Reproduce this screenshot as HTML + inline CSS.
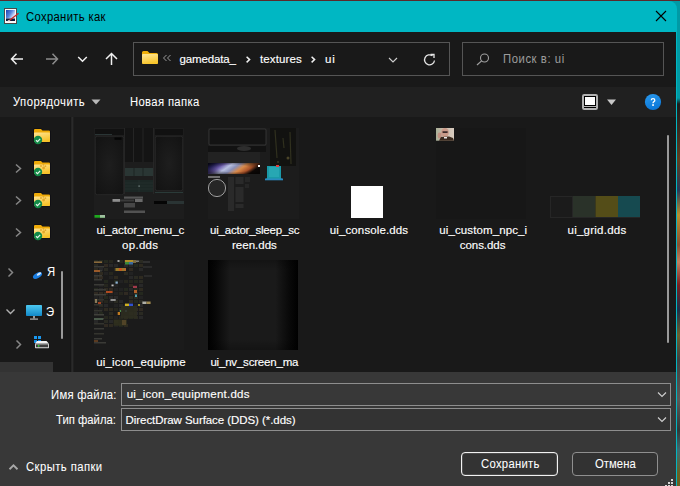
<!DOCTYPE html>
<html><head><meta charset="utf-8">
<style>
*{margin:0;padding:0;box-sizing:border-box}
html,body{width:680px;height:486px;overflow:hidden;background:#1a2a30}
body{position:relative;font-family:"Liberation Sans",sans-serif;font-size:12px;color:#fff}
.a{position:absolute}
.t{position:absolute;white-space:pre;line-height:14px;font-size:11.5px;-webkit-text-stroke:0.15px currentColor}
</style></head><body>
<!-- background strip on right -->
<div class="a" style="left:676px;top:0;width:4px;height:486px;background:linear-gradient(#009aa5 0,#009aa5 98px,#1c1c1c 104px,#3a2a20 130px,#604020 160px,#2a3a58 190px,#b89030 215px,#8a5030 245px,#c08060 262px,#7a2020 285px,#203048 310px,#6a6030 335px,#404040 360px,#5a5a58 400px,#303838 430px,#406a70 450px,#6a6020 475px,#6a6020 486px)"></div>
<div class="a" style="left:660px;top:1px;width:20px;height:12px;background:#009aa5"></div>
<div class="a" style="left:0;top:0;width:680px;height:1px;background:#5a2a2c"></div>
<!-- dialog -->
<div class="a" style="left:0;top:1px;width:677px;height:485px;background:#00b7c3;border-top-right-radius:8px"></div>
<div class="a" style="left:0;top:32px;width:676px;height:454px;background:#191919"></div>
<!-- title -->
<svg class="a" style="left:0;top:0" width="24" height="30" viewBox="0 0 24 30">
 <defs><linearGradient id="ig" x1="0" y1="0" x2="1" y2="0.6"><stop offset="0" stop-color="#1a40b0"/><stop offset="0.55" stop-color="#5a88e0"/><stop offset="1" stop-color="#f0f4ff"/></linearGradient></defs>
 <rect x="4.5" y="8.5" width="12" height="15" fill="#fafafa" stroke="#4a4a4a"/>
 <rect x="6" y="10" width="9" height="8.5" fill="url(#ig)"/>
 <rect x="6" y="18.5" width="9" height="2.5" fill="#0c1838"/>
 <path d="M9 20.8L18.6 13.2" stroke="#c42a2a" stroke-width="1.4"/>
 <path d="M7.5 21.8L9.5 20.3" stroke="#e8e8e8" stroke-width="1.3"/>
</svg>
<svg class="a" style="left:655px;top:10px" width="12" height="12" viewBox="0 0 12 12"><path d="M1 1L11 11M11 1L1 11" stroke="#000" stroke-width="1.1"/></svg>

<!-- nav -->
<svg class="a" style="left:10px;top:53px" width="14" height="12" viewBox="0 0 14 12"><path d="M13 6H1.5M6.5 0.8L1.5 6L6.5 11.2" fill="none" stroke="#f0f0f0" stroke-width="1.5"/></svg>
<svg class="a" style="left:45px;top:53px" width="14" height="12" viewBox="0 0 14 12"><path d="M1 6H12.5M7.5 0.8L12.5 6L7.5 11.2" fill="none" stroke="#8c8c8c" stroke-width="1.5"/></svg>
<svg class="a" style="left:77px;top:55px" width="11" height="8" viewBox="0 0 11 8"><path d="M1.2 2L5.5 6.2L9.8 2" fill="none" stroke="#f0f0f0" stroke-width="1.5"/></svg>
<svg class="a" style="left:105px;top:52px" width="13" height="14" viewBox="0 0 13 14"><path d="M6.5 13V1.5M1 7L6.5 1.5L12 7" fill="none" stroke="#f0f0f0" stroke-width="1.5"/></svg>

<!-- address bar -->
<div class="a" style="left:133px;top:42px;width:317px;height:34px;border:1px solid #555"></div>
<svg class="a" style="left:141px;top:50px" width="18" height="15" viewBox="0 0 18 15">
 <defs><linearGradient id="fg" x1="0" y1="0" x2="0.3" y2="1"><stop offset="0" stop-color="#ffe89a"/><stop offset="1" stop-color="#f8c52c"/></linearGradient></defs>
 <path d="M1 2.5Q1 1 2.5 1H6.5L8.5 3H15.5Q17 3 17 4.5V12.5Q17 14 15.5 14H2.5Q1 14 1 12.5Z" fill="#f0b00a"/>
 <path d="M1 5Q1 4 2 4H16Q17 4 17 5V12.5Q17 14 15.5 14H2.5Q1 14 1 12.5Z" fill="url(#fg)"/>
</svg>
<svg class="a" style="left:162px;top:54px" width="10" height="8" viewBox="0 0 10 8"><path d="M4.5 1L1.5 4L4.5 7M8.5 1L5.5 4L8.5 7" fill="none" stroke="#9a9a9a" stroke-width="1"/></svg>
<svg class="a" style="left:240px;top:50px" width="20" height="20" viewBox="240 50 20 20"><path d="M246.6 56.8L249.6 59.6L246.6 62.4" fill="none" stroke="#f0f0f0" stroke-width="1.5"/></svg>
<svg class="a" style="left:305px;top:50px" width="20" height="20" viewBox="305 50 20 20"><path d="M311.6 56.8L314.6 59.6L311.6 62.4" fill="none" stroke="#f0f0f0" stroke-width="1.5"/></svg>
<svg class="a" style="left:388px;top:56px" width="10" height="8" viewBox="0 0 10 8"><path d="M1 2L5 6L9 2" fill="none" stroke="#d0d0d0" stroke-width="1.1"/></svg>
<svg class="a" style="left:423px;top:53px" width="14" height="14" viewBox="0 0 14 14"><path d="M11.5 7.5A5 5 0 1 1 9.5 2.8" fill="none" stroke="#e6e6e6" stroke-width="1.3"/><path d="M7.5 1.5H11V5" fill="none" stroke="#e6e6e6" stroke-width="1.3"/></svg>

<!-- search -->
<div class="a" style="left:462px;top:42px;width:202px;height:34px;border:1px solid #555"></div>
<svg class="a" style="left:476px;top:53px" width="14" height="13" viewBox="0 0 14 13"><circle cx="8.5" cy="5" r="4" fill="none" stroke="#a0a0a0" stroke-width="1.1"/><path d="M5.6 7.9L1 12" stroke="#a0a0a0" stroke-width="1.2"/></svg>

<!-- toolbar -->
<div class="a" style="left:0;top:87px;width:676px;height:30px;background:#202020"></div>
<svg class="a" style="left:91px;top:99px" width="10" height="6" viewBox="0 0 10 6"><path d="M0.5 0.5H9.5L5 5.5Z" fill="#b8b8b8"/></svg>
<svg class="a" style="left:575px;top:88px" width="95" height="28" viewBox="575 88 95 28">
 <rect x="582" y="94" width="16" height="16" rx="2.2" fill="#b2b2b2"/>
 <rect x="584" y="96" width="12" height="10" fill="#000"/>
 <rect x="585" y="97" width="10" height="8" fill="#fff"/>
 <rect x="584" y="107" width="12" height="1" fill="#000"/>
 <path d="M607 99.6H616L611.5 105Z" fill="#c8c8c8"/>
 <defs><linearGradient id="hg" x1="0" y1="0" x2="0.3" y2="1"><stop offset="0" stop-color="#2a9aee"/><stop offset="1" stop-color="#0c78d8"/></linearGradient></defs>
 <circle cx="653" cy="102" r="8.1" fill="url(#hg)"/>
 <path d="M651.3 100.3Q651.3 98.6 653 98.6Q654.8 98.6 654.8 100.2Q654.8 101.1 653.9 101.6Q653 102.1 653 103.2" fill="none" stroke="#fff" stroke-width="1.3"/>
 <rect x="652.2" y="104.2" width="1.7" height="1.7" fill="#fff"/>
</svg>

<!-- divider & sidebar -->
<div class="a" style="left:72px;top:117px;width:1px;height:255px;background:#2a2a2a"></div>
<!-- sidebar items -->
<div class="a" style="left:70px;top:117px;width:1px;height:255px;background:#161616"></div>
<div class="a" style="left:71px;top:117px;width:1px;height:255px;background:#242424"></div>
<div class="a" style="left:73px;top:117px;width:1px;height:255px;background:#1f1f1f"></div>
<svg class="a" style="left:0;top:117px" width="70" height="245" viewBox="0 117 70 245">
 <defs>
  <linearGradient id="fy" x1="0" y1="0" x2="0.4" y2="1"><stop offset="0" stop-color="#ffe597"/><stop offset="1" stop-color="#f7c22a"/></linearGradient>
  <g id="fold">
   <path d="M0 1Q0 0 1 0H7L8.5 1.6H15Q16 1.6 16 2.6V12Q16 13 15 13H1Q0 13 0 12Z" fill="#0a0a12" stroke="#0a0a12" stroke-width="1.2"/>
   <path d="M0 1Q0 0 1 0H7L8.5 1.6H15Q16 1.6 16 2.6V12Q16 13 15 13H1Q0 13 0 12Z" fill="#eeaa08"/>
   <path d="M0 4Q0 3.4 0.8 3.4H15.2Q16 3.4 16 4.2V12Q16 13 15 13H1Q0 13 0 12Z" fill="url(#fy)"/>
  </g>
  <g id="chk">
   <circle cx="4" cy="4" r="4.2" fill="#148a48"/>
   <path d="M2 4.2L3.5 5.6L6.2 2.8" fill="none" stroke="#e8f5ec" stroke-width="1.2"/>
  </g>
  <g id="paw" fill="#e0a020" opacity="0.85">
   <circle cx="0" cy="2" r="1"/><circle cx="2.4" cy="0.8" r="0.9"/><circle cx="4.4" cy="2.2" r="0.9"/><circle cx="2.6" cy="4" r="1.4"/>
  </g>
 </defs>
 <g transform="translate(34,129)"><use href="#fold"/></g>
 <g transform="translate(34,136)"><use href="#chk"/></g>
 <path d="M16 164.5L20.5 168.5L16 172.5" fill="none" stroke="#868686" stroke-width="1.5"/>
 <g transform="translate(34,161)"><use href="#fold"/><g transform="translate(7,3)"><use href="#paw"/></g></g>
 <g transform="translate(34,168)"><use href="#chk"/></g>
 <path d="M16 196.5L20.5 200.5L16 204.5" fill="none" stroke="#868686" stroke-width="1.5"/>
 <g transform="translate(34,193)"><use href="#fold"/><g transform="translate(7,3)"><use href="#paw"/></g></g>
 <g transform="translate(34,200)"><use href="#chk"/></g>
 <path d="M16 228.5L20.5 232.5L16 236.5" fill="none" stroke="#868686" stroke-width="1.5"/>
 <g transform="translate(34,225)"><use href="#fold"/><g transform="translate(7,3)"><use href="#paw"/></g></g>
 <g transform="translate(34,232)"><use href="#chk"/></g>
 <!-- Я row -->
 <path d="M8.5 268.5L12.5 272.5L8.5 276.5" fill="none" stroke="#868686" stroke-width="1.5"/>
 <ellipse cx="37.5" cy="275.5" rx="5" ry="2.6" transform="rotate(-30 37.5 275.5)" fill="#1a7de0"/>
 <ellipse cx="39" cy="274" rx="2.5" ry="1.2" transform="rotate(-30 39 274)" fill="#cfe6ff"/>
 <!-- Э row -->
 <path d="M6.5 309.5L10.5 313.5L14.5 309.5" fill="none" stroke="#b0b0b0" stroke-width="1.4"/>
 <defs><linearGradient id="mon" x1="0" y1="0" x2="0" y2="1"><stop offset="0" stop-color="#4cc8f0"/><stop offset="1" stop-color="#1288c8"/></linearGradient></defs>
 <rect x="26" y="305" width="16" height="11" rx="0.8" fill="url(#mon)"/>
 <rect x="33" y="316" width="2" height="2.5" fill="#9a9a9a"/>
 <rect x="30" y="318.5" width="8" height="1.2" fill="#b0b0b0"/>
 <!-- drive row -->
 <path d="M16.5 340.5L20.5 344.5L16.5 348.5" fill="none" stroke="#868686" stroke-width="1.5"/>
 <rect x="34" y="336" width="3" height="3" fill="#1a98f0"/><rect x="38" y="336" width="3" height="3" fill="#1a98f0"/>
 <rect x="34" y="340" width="3" height="3" fill="#1088e0"/><rect x="38" y="340" width="3" height="3" fill="#1088e0"/>
 <path d="M35 343.6L37 341H46.5L48.8 343.6Z" fill="#f2f2f2"/>
 <rect x="35" y="343.6" width="14" height="4.6" rx="0.6" fill="#d0d0d0"/>
 <rect x="36" y="344.4" width="12" height="2.8" fill="#3e3e3e"/>
 <circle cx="38.6" cy="345.8" r="0.9" fill="#30e030"/>
 <!-- scrollbar -->
 <rect x="61" y="271" width="2" height="68" rx="1" fill="#9a9a9a"/>
</svg>


<!-- thumbnails -->
<svg class="a" style="left:94px;top:128px" width="90" height="91" viewBox="0 0 90 91">
 <defs><radialGradient id="pv" cx="0.5" cy="0.5" r="0.7"><stop offset="0" stop-color="#1e1e1e"/><stop offset="1" stop-color="#121212"/></radialGradient></defs>
 <rect width="90" height="91" fill="#1d1d1d"/>
 <rect x="1" y="1" width="29" height="6" fill="#111"/>
 <rect x="1" y="6" width="17" height="1" fill="#2a3535"/>
 <rect x="1.3" y="8.3" width="28.4" height="58.4" rx="2" fill="url(#pv)" stroke="#2c2c2c" stroke-width="0.7"/>
 <rect x="20.5" y="9.5" width="7" height="2.3" fill="#050505"/>
 <rect x="30" y="0" width="30" height="34" fill="#141414"/>
 <path d="M30.5 0V66M39.5 0V34M49 0V34M59.5 0V66" stroke="#2a2a2a" stroke-width="0.8"/>
 <rect x="31" y="40" width="28" height="8" fill="#2a3634"/>
 <path d="M40 40V48M49 40V48" stroke="#1a2220" stroke-width="0.8"/>
 <rect x="31" y="52" width="28" height="12" fill="#1c2725"/>
 <path d="M31 55H59M31 58H59M31 61H59M45 52V64" stroke="#283431" stroke-width="0.6"/>
 <rect x="44.5" y="57.5" width="1.2" height="1.2" fill="#8a9a98"/>
 <rect x="61" y="1" width="28" height="6" fill="#111"/>
 <rect x="61.3" y="8.3" width="27.4" height="54.4" rx="2" fill="url(#pv)" stroke="#2c2c2c" stroke-width="0.7"/>
 <rect x="61" y="64" width="28" height="1" fill="#2a3a38"/>
 <rect x="60" y="73" width="13" height="3" fill="#050505"/>
 <rect x="73" y="73" width="17" height="3" fill="#2a3434"/>
 <rect x="30" y="68.5" width="19" height="2.2" fill="#555"/>
 <rect x="18.5" y="71" width="7.5" height="2.8" fill="#8e8e8e"/>
 <rect x="26" y="71.5" width="14" height="2" fill="#3a3a3a"/>
 <rect x="41" y="71" width="7.6" height="3" fill="#6a6a6a"/>
 <rect x="30" y="75" width="11" height="4.5" fill="#474747"/>
 <rect x="30" y="82.5" width="21" height="2.5" fill="#525252"/>
 <rect x="0.5" y="87" width="10.5" height="2.7" fill="#1ea81e"/>
 <rect x="6" y="87" width="5" height="2.7" fill="#a0c0a0"/>
</svg>
<svg class="a" style="left:208px;top:128px" width="91" height="91" viewBox="0 0 91 91">
 <defs><linearGradient id="neb" x1="0" y1="0" x2="1" y2="0.3"><stop offset="0" stop-color="#0a0a20"/><stop offset="0.15" stop-color="#302a70"/><stop offset="0.3" stop-color="#6a5aa8"/><stop offset="0.45" stop-color="#b8c0e0"/><stop offset="0.58" stop-color="#8a90b8"/><stop offset="0.72" stop-color="#d88a4a"/><stop offset="0.88" stop-color="#a85028"/><stop offset="1" stop-color="#100a08"/></linearGradient><radialGradient id="nebd" cx="0.5" cy="0.5" r="0.6"><stop offset="0.5" stop-color="#000" stop-opacity="0"/><stop offset="1" stop-color="#000" stop-opacity="0.55"/></radialGradient></defs>
 <rect width="91" height="91" fill="#1c1c1c"/>
 <rect x="1" y="1" width="57" height="16" rx="1" fill="#131313" stroke="#484848" stroke-width="0.6"/>
 <rect x="0" y="18" width="58" height="6" fill="#121212"/><ellipse cx="36" cy="20.5" rx="7" ry="2.5" fill="#2e2e2e"/>
 <rect x="0" y="24" width="52" height="11" fill="#222"/>
 <rect x="0" y="35" width="52" height="11" fill="url(#neb)"/><rect x="0" y="35" width="52" height="11" fill="url(#nebd)"/>
 <rect x="50" y="37" width="2" height="2" fill="#fff"/>
 <rect x="0" y="48" width="12" height="2" fill="#707070"/>
 <circle cx="9" cy="60" r="8.6" fill="#262626" stroke="#bdbdbd" stroke-width="0.8"/>
 <rect x="20" y="49" width="6" height="34" fill="#2a2a2a"/>
 <rect x="27.5" y="49" width="8" height="7" fill="#2a2a2a"/>
 <rect x="27.5" y="59" width="8" height="15" fill="#2a2a2a"/>
 <rect x="27.5" y="76" width="8" height="4" fill="#2a2a2a"/>
 <rect x="37" y="49" width="5" height="5" fill="#262626"/>
 <rect x="37" y="56" width="4" height="4" fill="#262626"/>
 <rect x="62" y="0" width="26" height="38" fill="#121210"/>
 <path d="M67 2L69 30M82 4L83 36M75 10L76 20" stroke="#30301e" stroke-width="1.2"/><circle cx="80" cy="30" r="1.5" fill="#4a4428"/><circle cx="70" cy="34" r="1" fill="#3a3624"/>
 <path d="M59 38H73V50L75 52H57L59 50Z" fill="#1a9aa8"/>
 <rect x="61" y="39" width="10" height="10" fill="#2aaab5" opacity="0.8"/>
 <rect x="57" y="50.5" width="18" height="1.8" fill="#2a8ac0"/>
 <rect x="68" y="37" width="3" height="2" fill="#e04040"/>
</svg>
<div class="a" style="left:351px;top:186px;width:32px;height:32px;background:#fff"></div>
<svg class="a" style="left:436px;top:128px" width="90" height="91" viewBox="0 0 90 91">
 <defs><linearGradient id="fbg" x1="0" y1="0" x2="1" y2="0"><stop offset="0" stop-color="#a8b098"/><stop offset="0.4" stop-color="#c8b8a8"/><stop offset="1" stop-color="#d8ccc0"/></linearGradient></defs>
 <rect width="90" height="91" fill="#171717"/>
 <rect x="0" y="0" width="18" height="12.7" fill="url(#fbg)"/>
 <ellipse cx="9" cy="4.6" rx="3.8" ry="4.6" fill="#c89a88"/>
 <rect x="6.3" y="3.3" width="5.6" height="1.6" rx="0.8" fill="#3a2a28"/>
 <ellipse cx="3.6" cy="7.5" rx="2" ry="3" fill="#c09080"/>
 <path d="M3 12.7L5 9L13 8.4L17 10L18 12.7Z" fill="#3a2a1e"/>
 <rect x="8" y="9" width="3" height="1.5" fill="#e8e8e8"/>
</svg>
<svg class="a" style="left:550px;top:196px" width="90" height="22" viewBox="0 0 90 22">
 <rect x="0.5" y="0.5" width="22" height="21" fill="#1b1b1b" stroke="#262626"/>
 <rect x="23" y="0" width="22.5" height="22" fill="#2a3229"/>
 <rect x="45.5" y="0" width="22.5" height="22" fill="#544d18"/>
 <rect x="68" y="0" width="22" height="22" fill="#164a50"/>
 <rect x="0" y="21" width="90" height="1" fill="#262626"/>
</svg>
<svg class="a" style="left:94px;top:260px" width="90" height="90" viewBox="0 0 90 90">
 <rect width="90" height="90" fill="#1b1b1b"/>
 <rect x="0.0" y="0.0" width="4.0" height="3.0" fill="#24281e"/>
 <rect x="5.0" y="0.0" width="4.0" height="3.0" fill="#24281e"/>
 <rect x="10.0" y="0.0" width="4.0" height="3.0" fill="#24281e"/>
 <rect x="15.0" y="0.0" width="4.0" height="3.0" fill="#26261e"/>
 <rect x="25.0" y="0.0" width="4.0" height="3.0" fill="#24281e"/>
 <rect x="30.0" y="0.0" width="4.0" height="3.0" fill="#302a22"/>
 <rect x="35.0" y="0.0" width="4.0" height="3.0" fill="#282828"/>
 <rect x="40.0" y="0.0" width="4.0" height="3.0" fill="#2e2a20"/>
 <rect x="45.0" y="0.0" width="4.0" height="3.0" fill="#2a2a22"/>
 <rect x="0.0" y="4.0" width="4.0" height="3.0" fill="#2a2a22"/>
 <rect x="10.0" y="4.0" width="4.0" height="3.0" fill="#302a22"/>
 <rect x="15.0" y="4.0" width="4.0" height="3.0" fill="#282828"/>
 <rect x="20.0" y="4.0" width="4.0" height="3.0" fill="#282828"/>
 <rect x="30.0" y="4.0" width="4.0" height="3.0" fill="#282828"/>
 <rect x="35.0" y="4.0" width="4.0" height="3.0" fill="#282828"/>
 <rect x="40.0" y="4.0" width="4.0" height="3.0" fill="#24281e"/>
 <rect x="45.0" y="4.0" width="4.0" height="3.0" fill="#2e2a20"/>
 <rect x="0.0" y="8.0" width="4.0" height="3.0" fill="#2e2a20"/>
 <rect x="5.0" y="8.0" width="4.0" height="3.0" fill="#282828"/>
 <rect x="10.0" y="8.0" width="4.0" height="3.0" fill="#2a2a22"/>
 <rect x="20.0" y="8.0" width="4.0" height="3.0" fill="#2a2a22"/>
 <rect x="25.0" y="8.0" width="4.0" height="3.0" fill="#222"/>
 <rect x="35.0" y="8.0" width="4.0" height="3.0" fill="#302a22"/>
 <rect x="45.0" y="8.0" width="4.0" height="3.0" fill="#282828"/>
 <rect x="0.0" y="12.0" width="4.0" height="3.0" fill="#222"/>
 <rect x="5.0" y="12.0" width="4.0" height="3.0" fill="#2e2a20"/>
 <rect x="10.0" y="12.0" width="4.0" height="3.0" fill="#222"/>
 <rect x="15.0" y="12.0" width="4.0" height="3.0" fill="#26261e"/>
 <rect x="30.0" y="12.0" width="4.0" height="3.0" fill="#2a2a22"/>
 <rect x="35.0" y="12.0" width="4.0" height="3.0" fill="#222"/>
 <rect x="0.0" y="16.0" width="4.0" height="3.0" fill="#302a22"/>
 <rect x="5.0" y="16.0" width="4.0" height="3.0" fill="#302a22"/>
 <rect x="15.0" y="16.0" width="4.0" height="3.0" fill="#222"/>
 <rect x="20.0" y="16.0" width="4.0" height="3.0" fill="#2e2a20"/>
 <rect x="35.0" y="16.0" width="4.0" height="3.0" fill="#282828"/>
 <rect x="40.0" y="16.0" width="4.0" height="3.0" fill="#2a2a22"/>
 <rect x="45.0" y="16.0" width="4.0" height="3.0" fill="#2e2a20"/>
 <rect x="10.0" y="20.0" width="4.0" height="3.0" fill="#24281e"/>
 <rect x="20.0" y="20.0" width="4.0" height="3.0" fill="#24281e"/>
 <rect x="25.0" y="20.0" width="4.0" height="3.0" fill="#222"/>
 <rect x="30.0" y="20.0" width="4.0" height="3.0" fill="#26261e"/>
 <rect x="35.0" y="20.0" width="4.0" height="3.0" fill="#26261e"/>
 <rect x="40.0" y="20.0" width="4.0" height="3.0" fill="#24281e"/>
 <rect x="45.0" y="20.0" width="4.0" height="3.0" fill="#2a2a22"/>
 <rect x="5.0" y="24.0" width="4.0" height="3.0" fill="#222"/>
 <rect x="10.0" y="24.0" width="4.0" height="3.0" fill="#26261e"/>
 <rect x="20.0" y="24.0" width="4.0" height="3.0" fill="#222"/>
 <rect x="35.0" y="24.0" width="4.0" height="3.0" fill="#2e2a20"/>
 <rect x="45.0" y="24.0" width="4.0" height="3.0" fill="#282828"/>
 <rect x="0.0" y="28.0" width="4.0" height="3.0" fill="#24281e"/>
 <rect x="5.0" y="28.0" width="4.0" height="3.0" fill="#282828"/>
 <rect x="10.0" y="28.0" width="4.0" height="3.0" fill="#2e2a20"/>
 <rect x="15.0" y="28.0" width="4.0" height="3.0" fill="#302a22"/>
 <rect x="20.0" y="28.0" width="4.0" height="3.0" fill="#222"/>
 <rect x="25.0" y="28.0" width="4.0" height="3.0" fill="#222"/>
 <rect x="30.0" y="28.0" width="4.0" height="3.0" fill="#24281e"/>
 <rect x="35.0" y="28.0" width="4.0" height="3.0" fill="#282828"/>
 <rect x="40.0" y="28.0" width="4.0" height="3.0" fill="#24281e"/>
 <rect x="45.0" y="28.0" width="4.0" height="3.0" fill="#2e2a20"/>
 <rect x="0.0" y="32.0" width="4.0" height="3.0" fill="#302a22"/>
 <rect x="5.0" y="32.0" width="4.0" height="3.0" fill="#302a22"/>
 <rect x="10.0" y="32.0" width="4.0" height="3.0" fill="#2e2a20"/>
 <rect x="15.0" y="32.0" width="4.0" height="3.0" fill="#222"/>
 <rect x="20.0" y="32.0" width="4.0" height="3.0" fill="#222"/>
 <rect x="25.0" y="32.0" width="4.0" height="3.0" fill="#26261e"/>
 <rect x="30.0" y="32.0" width="4.0" height="3.0" fill="#302a22"/>
 <rect x="35.0" y="32.0" width="4.0" height="3.0" fill="#222"/>
 <rect x="40.0" y="32.0" width="4.0" height="3.0" fill="#2e2a20"/>
 <rect x="45.0" y="32.0" width="4.0" height="3.0" fill="#24281e"/>
 <rect x="0.0" y="36.0" width="4.0" height="3.0" fill="#222"/>
 <rect x="5.0" y="36.0" width="4.0" height="3.0" fill="#282828"/>
 <rect x="10.0" y="36.0" width="4.0" height="3.0" fill="#24281e"/>
 <rect x="15.0" y="36.0" width="4.0" height="3.0" fill="#282828"/>
 <rect x="20.0" y="36.0" width="4.0" height="3.0" fill="#282828"/>
 <rect x="35.0" y="36.0" width="4.0" height="3.0" fill="#2a2a22"/>
 <rect x="40.0" y="36.0" width="4.0" height="3.0" fill="#2a2a22"/>
 <rect x="45.0" y="36.0" width="4.0" height="3.0" fill="#222"/>
 <rect x="0.0" y="40.0" width="4.0" height="3.0" fill="#2a2a22"/>
 <rect x="5.0" y="40.0" width="4.0" height="3.0" fill="#302a22"/>
 <rect x="10.0" y="40.0" width="4.0" height="3.0" fill="#26261e"/>
 <rect x="15.0" y="40.0" width="4.0" height="3.0" fill="#222"/>
 <rect x="20.0" y="40.0" width="4.0" height="3.0" fill="#2a2a22"/>
 <rect x="25.0" y="40.0" width="4.0" height="3.0" fill="#282828"/>
 <rect x="35.0" y="40.0" width="4.0" height="3.0" fill="#302a22"/>
 <rect x="40.0" y="40.0" width="4.0" height="3.0" fill="#24281e"/>
 <rect x="45.0" y="40.0" width="4.0" height="3.0" fill="#2a2a22"/>
 <rect x="5.0" y="44.0" width="4.0" height="3.0" fill="#2a2a22"/>
 <rect x="10.0" y="44.0" width="4.0" height="3.0" fill="#282828"/>
 <rect x="20.0" y="44.0" width="4.0" height="3.0" fill="#222"/>
 <rect x="25.0" y="44.0" width="4.0" height="3.0" fill="#282828"/>
 <rect x="30.0" y="44.0" width="4.0" height="3.0" fill="#282828"/>
 <rect x="35.0" y="44.0" width="4.0" height="3.0" fill="#24281e"/>
 <rect x="40.0" y="44.0" width="4.0" height="3.0" fill="#222"/>
 <rect x="45.0" y="44.0" width="4.0" height="3.0" fill="#282828"/>
 <rect x="0.0" y="48.0" width="4.0" height="3.0" fill="#222"/>
 <rect x="5.0" y="48.0" width="4.0" height="3.0" fill="#222"/>
 <rect x="10.0" y="48.0" width="4.0" height="3.0" fill="#2e2a20"/>
 <rect x="15.0" y="48.0" width="4.0" height="3.0" fill="#2e2a20"/>
 <rect x="20.0" y="48.0" width="4.0" height="3.0" fill="#26261e"/>
 <rect x="25.0" y="48.0" width="4.0" height="3.0" fill="#282828"/>
 <rect x="40.0" y="48.0" width="4.0" height="3.0" fill="#302a22"/>
 <rect x="45.0" y="48.0" width="4.0" height="3.0" fill="#302a22"/>
 <rect x="0.0" y="52.0" width="4.0" height="3.0" fill="#282828"/>
 <rect x="5.0" y="52.0" width="4.0" height="3.0" fill="#24281e"/>
 <rect x="15.0" y="52.0" width="4.0" height="3.0" fill="#2a2a22"/>
 <rect x="35.0" y="52.0" width="4.0" height="3.0" fill="#2a2a22"/>
 <rect x="40.0" y="52.0" width="4.0" height="3.0" fill="#282828"/>
 <rect x="45.0" y="52.0" width="4.0" height="3.0" fill="#2a2a22"/>
 <rect x="10.0" y="56.0" width="4.0" height="3.0" fill="#26261e"/>
 <rect x="15.0" y="56.0" width="4.0" height="3.0" fill="#26261e"/>
 <rect x="20.0" y="56.0" width="4.0" height="3.0" fill="#222"/>
 <rect x="25.0" y="56.0" width="4.0" height="3.0" fill="#26261e"/>
 <rect x="30.0" y="56.0" width="4.0" height="3.0" fill="#2e2a20"/>
 <rect x="35.0" y="56.0" width="4.0" height="3.0" fill="#24281e"/>
 <rect x="40.0" y="56.0" width="4.0" height="3.0" fill="#2a2a22"/>
 <rect x="45.0" y="56.0" width="4.0" height="3.0" fill="#282828"/>
 <rect x="0.0" y="60.0" width="4.0" height="3.0" fill="#282828"/>
 <rect x="10.0" y="60.0" width="4.0" height="3.0" fill="#2a2a22"/>
 <rect x="15.0" y="60.0" width="4.0" height="3.0" fill="#282828"/>
 <rect x="20.0" y="60.0" width="4.0" height="3.0" fill="#2a2a22"/>
 <rect x="10.0" y="64.0" width="4.0" height="3.0" fill="#302a22"/>
 <rect x="15.0" y="64.0" width="4.0" height="3.0" fill="#2e2a20"/>
 <rect x="20.0" y="64.0" width="4.0" height="3.0" fill="#222"/>
 <rect x="25.0" y="64.0" width="4.0" height="3.0" fill="#24281e"/>
 <rect x="30.0" y="64.0" width="4.0" height="3.0" fill="#2e2a20"/>
 <rect x="0.0" y="1.0" width="8.0" height="1.5" fill="#34342e"/>
 <rect x="0.0" y="6.0" width="10.0" height="1.5" fill="#3a3a36"/>
 <rect x="0.0" y="10.0" width="8.0" height="1.5" fill="#3a3a36"/>
 <rect x="0.0" y="15.0" width="8.0" height="1.5" fill="#3a3a36"/>
 <rect x="0.0" y="19.0" width="8.0" height="1.5" fill="#3a3a36"/>
 <rect x="0.0" y="24.0" width="10.0" height="1.5" fill="#3a3a36"/>
 <rect x="0.0" y="29.0" width="12.0" height="1.5" fill="#3a3a36"/>
 <rect x="0.0" y="34.0" width="12.0" height="1.5" fill="#40403a"/>
 <rect x="0.0" y="39.0" width="10.0" height="1.5" fill="#34342e"/>
 <rect x="0.0" y="44.0" width="8.0" height="1.5" fill="#34342e"/>
 <rect x="0.0" y="50.0" width="8.0" height="1.5" fill="#34342e"/>
 <rect x="0.0" y="54.0" width="10.0" height="1.5" fill="#40403a"/>
 <rect x="0.0" y="58.0" width="10.0" height="1.5" fill="#40403a"/>
 <rect x="0.0" y="63.0" width="10.0" height="1.5" fill="#34342e"/>
 <rect x="0.0" y="68.0" width="10.0" height="1.5" fill="#3a3a36"/>
 <rect x="0.0" y="73.0" width="10.0" height="1.5" fill="#34342e"/>
 <rect x="0.0" y="78.0" width="8.0" height="1.5" fill="#3a3a36"/>
 <rect x="0.0" y="82.0" width="12.0" height="1.5" fill="#3a3a36"/>
 <rect x="0.0" y="1.5" width="8.0" height="1.5" fill="#8a6a3a"/>
 <rect x="0.0" y="10.0" width="6.0" height="2.0" fill="#9a5a2a"/>
 <rect x="0.0" y="58.0" width="9.0" height="2.0" fill="#4a5a4a"/>
 <rect x="0.0" y="80.0" width="4.0" height="2.0" fill="#5a3a20"/>
 <rect x="49.0" y="1.0" width="7.0" height="2.0" fill="#303030"/>
 <rect x="49.0" y="6.0" width="9.0" height="2.0" fill="#2a2a2a"/>
 <rect x="50.0" y="15.0" width="8.0" height="2.0" fill="#2a2a2a"/>
 <rect x="31.0" y="-0.5" width="8.0" height="2.5" fill="#b0902a"/>
 <rect x="31.0" y="2.0" width="4.0" height="2.5" fill="#3a8a3a"/>
 <rect x="35.0" y="2.0" width="4.0" height="2.5" fill="#3a6aa0"/>
 <rect x="39.0" y="0.0" width="3.0" height="3.0" fill="#7a6a40"/>
 <rect x="23.5" y="0.0" width="2.0" height="2.0" fill="#c0c0c0" opacity="0.8"/>
 <rect x="42.0" y="0.5" width="3.0" height="1.5" fill="#a0a0a0" opacity="0.7"/>
 <rect x="21.5" y="8.0" width="10.5" height="3.0" fill="#9a7a2a"/>
 <rect x="25.0" y="8.5" width="3.0" height="2.0" fill="#d04a20"/>
 <rect x="30.0" y="8.5" width="2.0" height="2.0" fill="#c06030"/>
 <rect x="21.5" y="21.5" width="2.3" height="2.2" fill="#8ab0d0"/>
 <rect x="17.5" y="24.5" width="2.1" height="1.8" fill="#d0d0d0" opacity="0.9"/>
 <rect x="12.0" y="31.0" width="6.6" height="2.0" fill="#b04a20"/>
 <rect x="39.0" y="25.8" width="4.0" height="2.2" fill="#a03a4a"/>
 <rect x="40.0" y="30.0" width="3.0" height="3.0" fill="#b0602a"/>
 <rect x="41.0" y="34.5" width="2.0" height="2.5" fill="#50a0b0"/>
 <rect x="16.5" y="39.0" width="5.2" height="2.0" fill="#909090"/>
 <rect x="1.0" y="39.0" width="2.0" height="4.0" fill="#8a7a5a"/>
 <rect x="4.0" y="42.0" width="3.0" height="2.0" fill="#a04020"/>
 <rect x="31.0" y="43.6" width="4.0" height="2.4" fill="#d0b020"/>
 <rect x="35.0" y="43.6" width="4.0" height="2.4" fill="#3050d0"/>
 <rect x="48.4" y="41.5" width="4.1" height="2.5" fill="#b0b0a8"/>
 <rect x="52.5" y="41.5" width="4.1" height="2.5" fill="#a08a50"/>
 <rect x="44.0" y="44.0" width="2.0" height="2.0" fill="#a09020"/>
 <rect x="23.7" y="52.0" width="2.3" height="3.0" fill="#c07a20"/>
 <rect x="25.8" y="50.0" width="2.0" height="2.0" fill="#4a8a4a"/>
 <rect x="31.0" y="50.0" width="2.0" height="2.0" fill="#6a9ac0"/>
 <rect x="27.0" y="46.0" width="16.0" height="12.5" fill="#2e2e20" opacity="0.9"/>
 <rect x="19.6" y="59.5" width="13.4" height="6.2" fill="#30301e" opacity="0.9"/>
 <rect x="28.0" y="60.0" width="4.0" height="5.0" fill="#5a4a2a" opacity="0.8"/>
</svg>
<svg class="a" style="left:208px;top:260px" width="90" height="90" viewBox="0 0 90 90">
 <defs><linearGradient id="nvv" x1="0" y1="0" x2="0" y2="1"><stop offset="0" stop-color="#000" stop-opacity="0.25"/><stop offset="0.12" stop-color="#000" stop-opacity="0"/><stop offset="0.88" stop-color="#000" stop-opacity="0"/><stop offset="1" stop-color="#000" stop-opacity="0.25"/></linearGradient><linearGradient id="nv" x1="0" y1="0" x2="1" y2="0"><stop offset="0" stop-color="#000"/><stop offset="0.08" stop-color="#070707"/><stop offset="0.25" stop-color="#1a1a1a"/><stop offset="0.75" stop-color="#1a1a1a"/><stop offset="0.92" stop-color="#070707"/><stop offset="1" stop-color="#000"/></linearGradient></defs>
 <rect width="90" height="90" fill="url(#nv)"/><rect width="90" height="90" fill="url(#nvv)"/>
</svg>
<!-- content scrollbar -->
<div class="a" style="left:667px;top:135px;width:2px;height:208px;background:#9a9a9a;border-radius:1px"></div>
<!-- bottom panel -->
<div class="a" style="left:0;top:372px;width:676px;height:114px;background:#383838"></div>
<div class="a" style="left:0;top:362px;width:53px;height:10px;background:#333333"></div>
<div class="a" style="left:121px;top:383px;width:550px;height:23px;border:1px solid #8e8e8e;background:#383838"></div>
<div class="a" style="left:121px;top:408px;width:550px;height:23px;border:1px solid #8e8e8e;background:#333333"></div>
<svg class="a" style="left:657px;top:391px" width="10" height="8" viewBox="0 0 10 8"><path d="M1 1.5L5 5.5L9 1.5" fill="none" stroke="#d0d0d0" stroke-width="1.1"/></svg>
<svg class="a" style="left:657px;top:416px" width="10" height="8" viewBox="0 0 10 8"><path d="M1 1.5L5 5.5L9 1.5" fill="none" stroke="#d0d0d0" stroke-width="1.1"/></svg>
<svg class="a" style="left:8px;top:463px" width="11" height="8" viewBox="0 0 11 8"><path d="M1.5 6.2L5.5 2.4L9.5 6.2" fill="none" stroke="#a8a8a8" stroke-width="1.9"/></svg>
<div class="a" style="left:461px;top:452px;width:97px;height:24px;border:1px solid #f2f2f2;border-radius:4px;background:#333;box-shadow:inset 0 0 0 0.6px rgba(255,255,255,0.25)"></div>
<div class="a" style="left:572px;top:452px;width:86px;height:24px;border:1px solid #8f8f8f;border-radius:4px;background:#323232"></div>
<svg class="a" style="left:660px;top:470px" width="16" height="16" viewBox="660 470 16 16" fill="#d6d6d6">
 <rect x="671" y="479" width="2" height="2"/><rect x="668" y="482" width="2" height="2"/><rect x="671" y="482" width="2" height="2"/>
 <rect x="665" y="485" width="2" height="2"/><rect x="668" y="485" width="2" height="2"/><rect x="671" y="485" width="2" height="2"/>
</svg>
<div class="t" id="title" style="left:25.74px;top:10px;font-size:12px;-webkit-text-stroke:0.05px currentColor;transform:scaleX(0.94);transform-origin:0 0;letter-spacing:0.347px;color:#000;-webkit-text-stroke:0">Сохранить как</div>
<div class="t" id="gd" style="left:179.52px;top:52px;letter-spacing:-0.150px">gamedata_</div>
<div class="t" id="tx" style="left:259.96px;top:52px;letter-spacing:0.126px">textures</div>
<div class="t" id="ui" style="left:325.06px;top:52px;letter-spacing:0.720px">ui</div>
<div class="t" id="se" style="left:502.82px;top:52px;font-size:12px;-webkit-text-stroke:0.05px currentColor;transform:scaleX(0.94);transform-origin:0 0;letter-spacing:0.608px;color:#9c9c9c">Поиск в: ui</div>
<div class="t" id="up" style="left:13.28px;top:95px;font-size:12px;-webkit-text-stroke:0.05px currentColor;transform:scaleX(0.94);transform-origin:0 0;letter-spacing:0.480px">Упорядочить</div>
<div class="t" id="nv" style="left:129.72px;top:95px;font-size:12px;-webkit-text-stroke:0.05px currentColor;transform:scaleX(0.94);transform-origin:0 0;letter-spacing:0.368px">Новая папка</div>
<div class="t" id="ya" style="left:46.50px;top:265px;font-size:12px;-webkit-text-stroke:0.05px currentColor;transform:scaleX(0.94);transform-origin:0 0">Я</div>
<div class="t" id="ee" style="left:45.70px;top:305px;font-size:12px;-webkit-text-stroke:0.05px currentColor;transform:scaleX(0.94);transform-origin:0 0">Э</div>
<div class="t" id="l1a" style="left:96.40px;top:223px;letter-spacing:-0.023px">ui_actor_menu_c</div>
<div class="t" id="l1b" style="left:122.06px;top:238px;letter-spacing:0.288px">op.dds</div>
<div class="t" id="l2a" style="left:209.94px;top:223px;letter-spacing:-0.200px">ui_actor_sleep_sc</div>
<div class="t" id="l2b" style="left:231.94px;top:238px;letter-spacing:0.023px">reen.dds</div>
<div class="t" id="l3" style="left:329.72px;top:223px;letter-spacing:0.129px">ui_console.dds</div>
<div class="t" id="l4a" style="left:439.28px;top:223px;letter-spacing:0.109px">ui_custom_npc_i</div>
<div class="t" id="l4b" style="left:459.74px;top:238px;letter-spacing:-0.046px">cons.dds</div>
<div class="t" id="l5" style="left:567.50px;top:223px;letter-spacing:0.240px">ui_grid.dds</div>
<div class="t" id="l6" style="left:96.18px;top:355px;letter-spacing:0.189px">ui_icon_equipme</div>
<div class="t" id="l7" style="left:210.40px;top:355px;letter-spacing:-0.194px">ui_nv_screen_ma</div>
<div class="t" id="im" style="left:50.60px;top:388px;font-size:12px;-webkit-text-stroke:0.05px currentColor;transform:scaleX(0.94);transform-origin:0 0;letter-spacing:0.293px">Имя файла:</div>
<div class="t" id="tp" style="left:56.18px;top:413px;font-size:12px;-webkit-text-stroke:0.05px currentColor;transform:scaleX(0.94);transform-origin:0 0;letter-spacing:0.018px">Тип файла:</div>
<div class="t" id="fn" style="left:126.72px;top:387px;letter-spacing:0.220px">ui_icon_equipment.dds</div>
<div class="t" id="ft" style="left:125.62px;top:413px;letter-spacing:-0.065px">DirectDraw Surface (DDS) (*.dds)</div>
<div class="t" id="sk" style="left:26.40px;top:460px;font-size:12px;-webkit-text-stroke:0.05px currentColor;transform:scaleX(0.94);transform-origin:0 0;letter-spacing:0.465px">Скрыть папки</div>
<div class="t" id="sv" style="left:480.74px;top:457px;font-size:12px;-webkit-text-stroke:0.05px currentColor;transform:scaleX(0.94);transform-origin:0 0;letter-spacing:0.320px">Сохранить</div>
<div class="t" id="cn" style="left:594.52px;top:457px;font-size:12px;-webkit-text-stroke:0.05px currentColor;transform:scaleX(0.94);transform-origin:0 0;letter-spacing:0.048px">Отмена</div>
</body></html>
